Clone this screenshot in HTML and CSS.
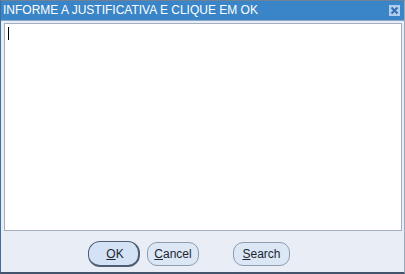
FILE: index.html
```html
<!DOCTYPE html>
<html>
<head>
<meta charset="utf-8">
<link rel="stylesheet" href="styles.css">
</head>
<body>
<div class="window">
  <div class="titlebar">
    <span class="title">INFORME A JUSTIFICATIVA E CLIQUE EM OK</span>
    <span class="close">
      <svg width="11" height="11" viewBox="0 0 11 11"><path d="M2.5 2.5 L8.5 8.5 M8.5 2.5 L2.5 8.5" stroke="#2f6fb5" stroke-width="2"/></svg>
    </span>
  </div>
  <div class="content">
    <div class="textbox"><span class="caret"></span></div>
    <div class="buttons">
      <button class="btn btn-default"><u>O</u>K</button>
      <button class="btn"><u>C</u>ancel</button>
      <button class="btn btn-search"><u>S</u>earch</button>
    </div>
  </div>
</div>
</body>
</html>
```
FILE: styles.css
```css
html, body {
  margin: 0;
  padding: 0;
  background: #e9eef6;
}
.window {
  width: 405px;
  height: 274px;
  box-sizing: border-box;
  display: flex;
  flex-direction: column;
  border-top: 1px solid #6f8196;
  border-left: 1px solid #3d6ea3;
  border-right: 1px solid #9aaabb;
  border-bottom: 2px solid #44546a;
  font-family: "Liberation Sans", Arial, sans-serif;
}
.titlebar {
  height: 19px;
  background: #3a85c7;
  color: #ffffff;
  display: flex;
  align-items: center;
  justify-content: space-between;
  padding: 0 4px 0 2px;
  font-size: 12px;
  border-bottom: 1px solid #8aa7c8;
}
.title {
  line-height: 19px;
}
.close {
  width: 11px;
  height: 11px;
  background: #b0cdee;
  display: block;
}
.close svg {
  display: block;
}
.content {
  flex: 1;
  display: flex;
  flex-direction: column;
  padding: 2px 2px 0 3px;
  background: #e9eef6;
}
.textbox {
  height: 206px;
  background: #ffffff;
  border: 1px solid #a3afbf;
  position: relative;
}
.caret {
  position: absolute;
  left: 3px;
  top: 3px;
  width: 1px;
  height: 13px;
  background: #000;
}
.buttons {
  display: flex;
  align-items: center;
  padding: 10px 0 0 84px;
  gap: 7px;
}
.btn {
  font-family: "Liberation Sans", Arial, sans-serif;
  font-size: 12px;
  color: #1e2530;
  background: #dbe7f5;
  border: 1px solid #8f9cad;
  border-radius: 10px;
  height: 24px;
  padding: 0 5px;
  margin: 0;
  min-width: 52px;
}
.btn-default {
  height: 26px;
  padding-left: 8px;
  border: 1px solid #4d5e75;
  border-right-width: 2px;
  border-bottom-width: 2px;
  border-radius: 12px;
  background: #d3e3f5;
}
.btn-search {
  margin-left: 27px;
  min-width: 57px;
}
```
